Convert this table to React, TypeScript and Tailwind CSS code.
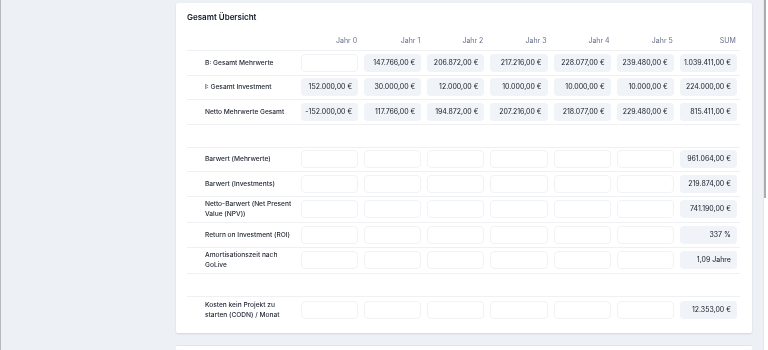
import React from 'react';

type Row =
  | { kind: 'gap' }
  | { kind: 'data'; label: string; values: (string | null)[] };

const rows: Row[] = [
  {
    kind: 'data',
    label: 'B: Gesamt Mehrwerte',
    values: [null, '147.766,00 €', '206.872,00 €', '217.216,00 €', '228.077,00 €', '239.480,00 €', '1.039.411,00 €'],
  },
  {
    kind: 'data',
    label: 'I: Gesamt Investment',
    values: ['152.000,00 €', '30.000,00 €', '12.000,00 €', '10.000,00 €', '10.000,00 €', '10.000,00 €', '224.000,00 €'],
  },
  {
    kind: 'data',
    label: 'Netto Mehrwerte Gesamt',
    values: ['-152.000,00 €', '117.766,00 €', '194.872,00 €', '207.216,00 €', '218.077,00 €', '229.480,00 €', '815.411,00 €'],
  },
  { kind: 'gap' },
  { kind: 'data', label: 'Barwert (Mehrwerte)', values: [null, null, null, null, null, null, '961.064,00 €'] },
  { kind: 'data', label: 'Barwert (Investments)', values: [null, null, null, null, null, null, '219.874,00 €'] },
  { kind: 'data', label: 'Netto-Barwert (Net Present Value (NPV))', values: [null, null, null, null, null, null, '741.190,00 €'] },
  { kind: 'data', label: 'Return on Investment (ROI)', values: [null, null, null, null, null, null, '337 %'] },
  { kind: 'data', label: 'Amortisationszeit nach GoLive', values: [null, null, null, null, null, null, '1,09 Jahre'] },
  { kind: 'gap' },
  { kind: 'data', label: 'Kosten kein Projekt zu starten (CODN) / Monat', values: [null, null, null, null, null, null, '12.353,00 €'] },
];

const headers = ['Jahr 0', 'Jahr 1', 'Jahr 2', 'Jahr 3', 'Jahr 4', 'Jahr 5', 'SUM'];

const Cell: React.FC<{ value: string | null }> = ({ value }) => (
  <div className="w-[63.14px] shrink-0 px-[3px]">
    {value === null ? (
      <div className="h-[18px] rounded-[4px] border border-[#f0f2f5] bg-white" />
    ) : (
      <div className="h-[18px] rounded-[4px] bg-[#f0f3f7] flex items-center justify-end pr-[6px] text-[7px] text-[#141a26]">
        {value}
      </div>
    )}
  </div>
);

export default function App() {
  return (
    <div
      className="w-[768px] h-[350px] overflow-hidden flex bg-[#edf0f5] border-l border-[#b4b8bf]"
      style={{ fontFamily: 'Inter, "Noto Sans", sans-serif' }}
    >
      <div className="w-[175px] shrink-0" />

      <div className="w-[576px] shrink-0 flex flex-col gap-[12px] pt-[3px]">
        <div className="bg-white rounded-[2px] shadow-[0_1px_2px_rgba(15,23,42,0.12)] pl-[11px] pr-[12px] pt-[9px] pb-[10px]">
          <div className="[will-change:transform]">
            <h2 className="text-[8px] leading-[10px] font-semibold text-[#111827]">Gesamt Übersicht</h2>

            <div className="flex h-[28px] items-end pb-[4px]">
              <div className="w-[111px] shrink-0" />
              {headers.map((h) => (
                <div key={h} className="w-[63.14px] shrink-0 px-[4px] text-right text-[7px] leading-[10px] text-[#66708a]">
                  {h}
                </div>
              ))}
            </div>

            {rows.map((row, i) =>
              row.kind === 'gap' ? (
                <div key={i} className="h-[23px] border-t border-[#eef0f4]" />
              ) : (
                <div key={i} className="flex items-center py-[2.75px] border-t border-[#eef0f4]">
                  <div className="w-[111px] shrink-0 pl-[18px] pr-[2px] text-[6.6px] leading-[10px] font-medium text-[#1f2532]">
                    {row.label}
                  </div>
                  {row.values.map((v, j) => (
                    <Cell key={j} value={v} />
                  ))}
                </div>
              ),
            )}
          </div>
        </div>

        <div className="bg-white rounded-[2px] border-t border-[#dfe3ea] h-[40px] shrink-0" />
      </div>

      <div className="w-[11px] shrink-0" />

      <div className="w-[5px] shrink-0 bg-white border-l border-[#e3e6eb]">
        <div className="h-[198px] w-[2px] bg-[#a9adb3]" />
      </div>
    </div>
  );
}
